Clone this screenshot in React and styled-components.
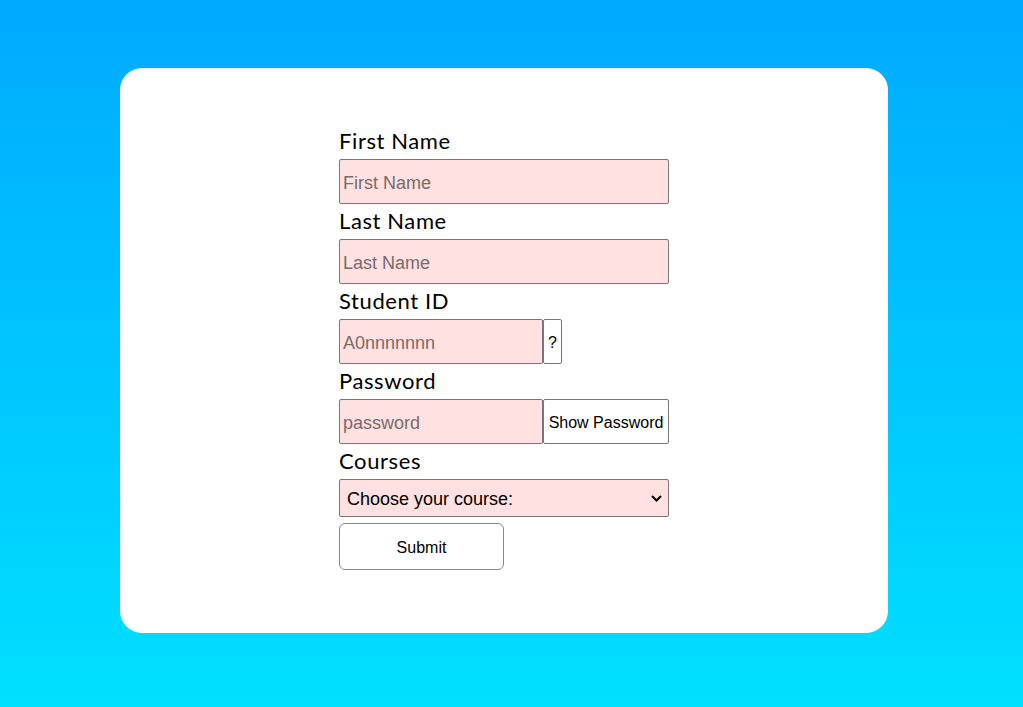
import React from "react";
import styled, { createGlobalStyle } from "styled-components";

const Global = createGlobalStyle`
  html, body { margin: 0; padding: 0; }
  body {
    min-height: 707px;
    background: linear-gradient(180deg, #00aaff 0%, #00e0ff 100%);
  }
`;

const Page = styled.div`
  min-height: 707px;
  padding: 68px 0 0 120px;
  box-sizing: border-box;
  display: flex;
  align-items: flex-start;
`;

const Card = styled.div`
  width: 768px;
  height: 565px;
  background: #fff;
  border-radius: 22px;
  box-sizing: border-box;
  padding: 58px 0 0 219px;
`;

const Form = styled.form`
  width: 330px;
  display: flex;
  flex-direction: column;
`;

const Label = styled.label`
  font-family: "Lato", "Noto Sans", sans-serif;
  font-size: 22px;
  color: #000;
  height: 33px;
  line-height: 29px;
  letter-spacing: 0.6px;
`;

const Row = styled.div`
  display: flex;
  margin-bottom: 2px;
`;

const Input = styled.input`
  box-sizing: border-box;
  width: ${(p) => p.$w || "330px"};
  height: 45px;
  margin: 0;
  padding: 3px 3px 0;
  background: #ffe1e1;
  border: 1px solid #777;
  border-radius: 2px;
  font-family: "Liberation Sans", Arial, sans-serif;
  font-size: 18px;
  color: #000;
  &::placeholder { color: #7a6a6a; }
`;

const SideButton = styled.button`
  box-sizing: border-box;
  height: 45px;
  width: ${(p) => p.$w};
  margin: 0;
  padding: 3px 4px 0;
  background: #fff;
  border: 1px solid #777;
  border-radius: 2px;
  font-family: "Liberation Sans", Arial, sans-serif;
  font-size: 16px;
  color: #000;
`;

const SelectWrap = styled.div`
  position: relative;
  width: 330px;
  height: 38px;
  margin-bottom: 6px;
`;

const Select = styled.select`
  appearance: none;
  box-sizing: border-box;
  width: 100%;
  height: 100%;
  margin: 0;
  padding: 2px 7px 0;
  background: #ffe1e1;
  border: 1px solid #777;
  border-radius: 2px;
  font-family: "Liberation Sans", Arial, sans-serif;
  font-size: 18px;
  color: #000;
`;

const Chevron = styled.svg`
  position: absolute;
  right: 7px;
  top: 16px;
  pointer-events: none;
`;

const Submit = styled.button`
  box-sizing: border-box;
  width: 165px;
  height: 47px;
  padding-top: 4px;
  background: #fff;
  border: 1px solid #888;
  border-radius: 6px;
  font-family: "Liberation Sans", Arial, sans-serif;
  font-size: 16px;
  color: #000;
`;

export default function App() {
  return (
    <>
      <Global />
      <Page>
        <Card>
          <Form onSubmit={(e) => e.preventDefault()}>
            <Label>First Name</Label>
            <Row><Input placeholder="First Name" /></Row>
            <Label>Last Name</Label>
            <Row><Input placeholder="Last Name" /></Row>
            <Label>Student ID</Label>
            <Row>
              <Input $w="204px" placeholder="A0nnnnnnn" />
              <SideButton type="button" $w="19px">?</SideButton>
            </Row>
            <Label>Password</Label>
            <Row>
              <Input $w="204px" type="password" placeholder="password" />
              <SideButton type="button" $w="126px">Show Password</SideButton>
            </Row>
            <Label>Courses</Label>
            <SelectWrap>
              <Select defaultValue="">
                <option value="">Choose your course:</option>
              </Select>
              <Chevron width="11" height="7" viewBox="0 0 11 7">
                <path d="M1 1 L5.5 5.5 L10 1" fill="none" stroke="#000" strokeWidth="2" />
              </Chevron>
            </SelectWrap>
            <Submit type="submit">Submit</Submit>
          </Form>
        </Card>
      </Page>
    </>
  );
}
